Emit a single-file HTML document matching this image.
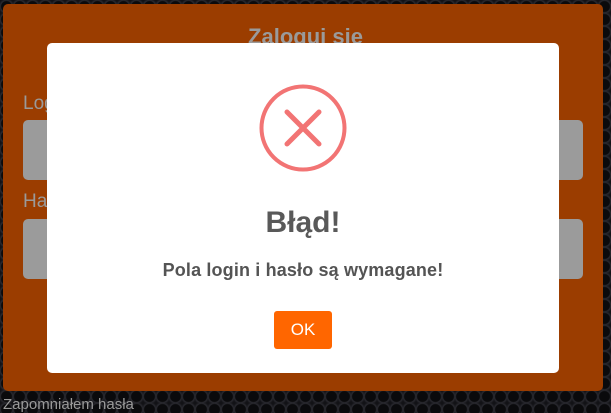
<!DOCTYPE html>
<html><head><meta charset="utf-8"><style>
*{margin:0;padding:0;box-sizing:border-box}
body{width:611px;height:410px;overflow:hidden;position:relative;font-family:"Liberation Sans",sans-serif;
background-color:#121216;
background-image:radial-gradient(circle at 50% 50%,#0a0a0c 0,#0a0a0c 5px,#2a2a30 6px,#121216 8px);
background-size:13px 13px;}
.panel{position:absolute;left:3px;top:4px;width:600px;height:387px;background:#9b3d00;border-radius:5px}
.title{position:absolute;left:0;width:611px;top:24px;text-align:center;color:#9a9a9a;font-weight:bold;font-size:22px}
.lab{position:absolute;left:23px;color:#9a9a9a;font-size:19px}
.inp{position:absolute;left:23px;width:560px;height:60px;background:#9b9b9b;border-radius:5px}
.forgot{position:absolute;left:3px;top:396px;color:#9a9a9a;font-size:15px}
.modal{position:absolute;left:47px;top:43px;width:512px;height:330px;background:#fff;border-radius:5px}
.h{position:absolute;left:0;width:512px;top:163px;text-align:center;font-size:30px;font-weight:bold;color:#595959}
.m{position:absolute;left:0;width:512px;top:217px;text-align:center;font-size:18px;font-weight:bold;color:#545454;letter-spacing:0.15px}
.ok{position:absolute;left:227px;top:268px;width:58px;height:38px;background:#ff6600;border-radius:3px;color:#fff;font-size:17px;text-align:center;line-height:38px}
</style></head><body>
<div class="panel"></div>
<div class="title">Zaloguj się</div>
<div class="lab" style="top:93px">Login</div>
<div class="inp" style="top:120px"></div>
<div class="lab" style="top:191px">Hasło</div>
<div class="inp" style="top:219px"></div>
<div class="forgot">Zapomniałem hasła</div>
<div class="modal">
<svg style="position:absolute;left:212px;top:41px" width="88" height="88" viewBox="0 0 88 88">
<circle cx="44" cy="44" r="41.5" fill="none" stroke="#f27474" stroke-width="4"/>
<path d="M28 28 L60 60 M60 28 L28 60" stroke="#f27474" stroke-width="5" stroke-linecap="round"/>
</svg>
<div class="h">Błąd!</div>
<div class="m">Pola login i hasło są wymagane!</div>
<div class="ok">OK</div>
</div>
</body></html>
